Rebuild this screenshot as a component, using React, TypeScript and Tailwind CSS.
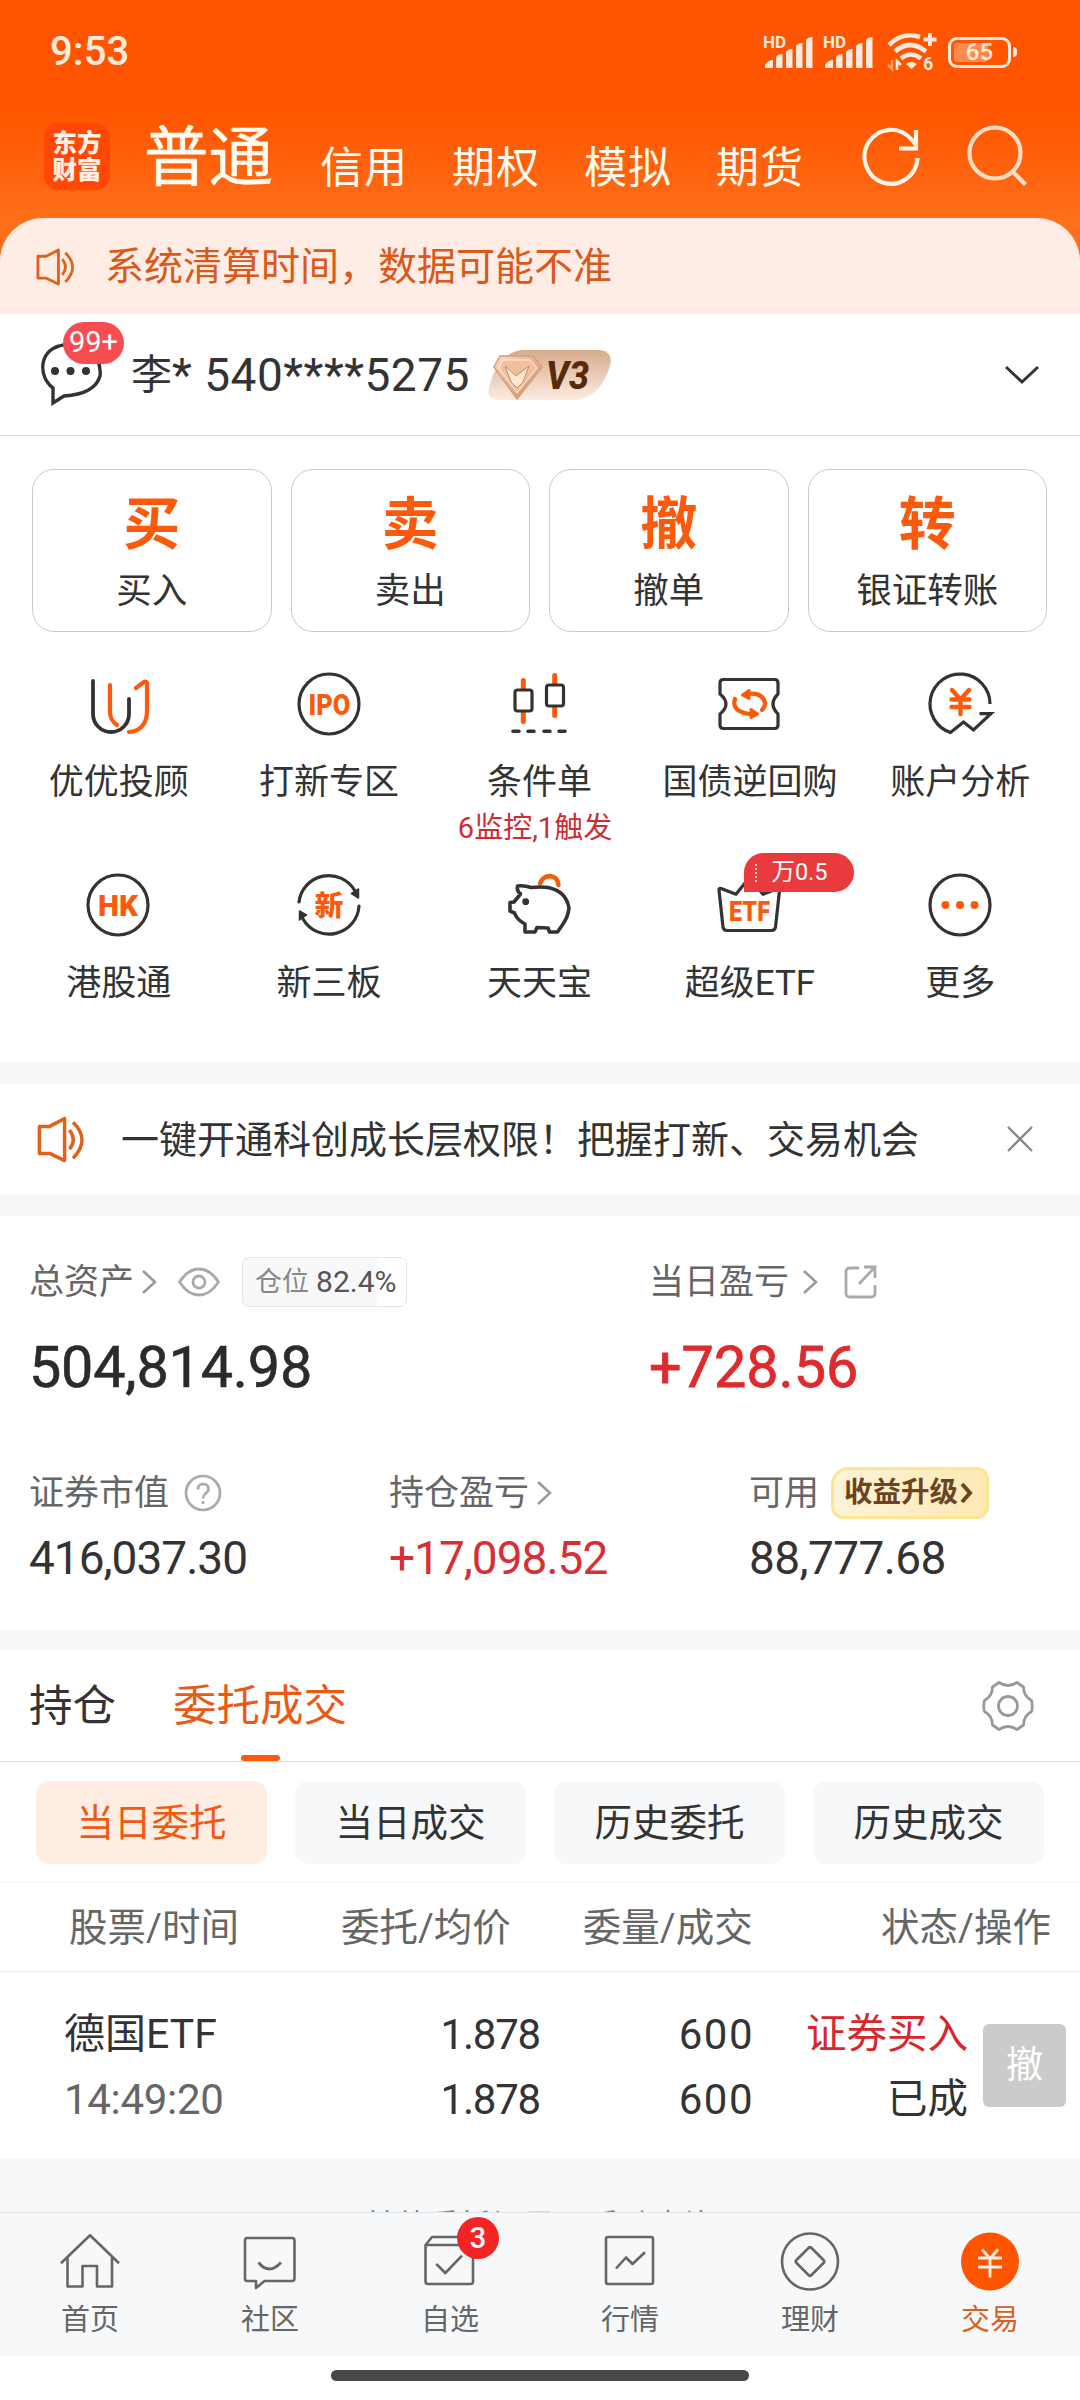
import type { ReactNode } from "react";

const INK = "#333333";
const ORANGE = "#fb5a0c";

/* ---------- status bar ---------- */

const Signal = () => (
  <svg width="52" height="36" viewBox="0 0 52 36" fill="#ffe9dc">
    <text x="0" y="14" fontSize="16.500" fontWeight="700" fontFamily="Roboto" textLength="23" lengthAdjust="spacingAndGlyphs">
      HD
    </text>
    <path d="M2 34v-3q3-5 8-5v8zM13 34V23q2-3 6.500-3v14zM23 34V18q2-3 6.500-3v19zM33 34V12q2-3 6.500-3v25zM43 34V6q2-3 6.500-3v31z" />
  </svg>
);

const Wifi = () => (
  <svg width="52" height="40" viewBox="0 0 52 40" fill="none" stroke="#ffe9dc">
    <path d="M2 13Q16-1 33 5" strokeWidth="4.600" />
    <path d="M8 19.500q15-13 31 0" strokeWidth="4.600" />
    <path d="M14 26.500q10-8 20 0" strokeWidth="4.600" />
    <path d="m19 32 5.500 5 5.500-5q-5.500-4-11 0z" fill="#ffe9dc" stroke="none" />
    <path d="M43 1v13M36.500 7.500h13" strokeWidth="4" />
    <path d="M5 28v9l-4-4" strokeWidth="2.500" opacity=".5" />
    <path d="M10 38v-9l4 4" strokeWidth="2.500" />
    <text x="36" y="38" fontSize="18" fontWeight="700" fontFamily="Roboto" fill="#ffe9dc" stroke="none">
      6
    </text>
  </svg>
);

const StatusBar = () => (
  <div className="flex h-[104px] items-center justify-between pl-[50px] pr-[63px]">
    <span className="text-[40px] font-medium leading-none tracking-[0.2px] text-[#ffeadd]">9:53</span>
    <div className="flex items-center">
      <Signal />
      <span className="w-2" />
      <Signal />
      <span className="w-3" />
      <Wifi />
      <span className="w-[9px]" />
      <div className="relative flex h-[31px] w-[63px] items-center justify-center rounded-[9px] border-[3px] border-[#ffe9dc]">
        <div className="absolute left-[3px] top-[3px] h-[19px] w-[34px] rounded-[3px] bg-[#ff8a4d]" />
        <span className="relative text-[24px] font-medium leading-none text-[#ffe9dc]">65</span>
      </div>
      <span className="ml-[2px] h-[10px] w-[4px] rounded-r bg-[#ffe9dc]" />
    </div>
  </div>
);

/* ---------- header ---------- */

const Header = () => (
  <div className="flex h-[114px] pl-[44px]">
    <div className="mt-[19px] flex h-[67px] w-[66px] shrink-0 flex-col items-center justify-center rounded-[14px] bg-[#ff4708] text-[24.500px] font-black leading-[27px] text-[#fff1e8]">
      <span>东方</span>
      <span>财富</span>
    </div>
    <div className="ml-[34px] mt-[18px] w-[129px] shrink-0 whitespace-nowrap text-[64.500px] leading-[72px] text-[#fffbef] [-webkit-text-stroke:0.6px_#fffbef]">
      普通
    </div>
    <div className="ml-[47px] mt-[36px] flex shrink-0 gap-[44px] text-[43px] leading-[56px] tracking-[1px] text-[#fffbef]">
      {["信用", "期权", "模拟", "期货"].map((t) => (
        <span key={t} className="w-[88px] whitespace-nowrap">
          {t}
        </span>
      ))}
    </div>
    <svg className="ml-[58px] mt-[18px] shrink-0" width="62" height="66" viewBox="0 0 62 66" fill="none" stroke="#fff6e8" strokeWidth="4.200">
      <path d="M55.500 36A26.500 27 0 1 1 49 17l5 6" />
      <path d="M54 8v18.500H37" />
    </svg>
    <svg className="ml-[41px] mt-[18px] shrink-0" width="64" height="66" viewBox="0 0 64 66" fill="none" stroke="#ffdcc4" strokeWidth="4.200">
      <circle cx="30" cy="31" r="25.500" />
      <path d="M47 49l13.500 13.500" />
    </svg>
  </div>
);

const Speaker = ({ size }: { size: number }) => (
  <svg width={size} height={size} viewBox="0 0 40 40" fill="none" stroke="#e0611c" strokeWidth="2.900" strokeLinejoin="round">
    <path d="M2 9.500h8.500L23 3v35L10.500 32H2z" />
    <path d="M27 12.500q6.500 8 0 16M30 6q15 14.500 0 30" />
  </svg>
);

const ChevronRight = ({ className = "" }: { className?: string }) => (
  <svg className={className} width="16" height="26" viewBox="0 0 16 26" fill="none" stroke="#999" strokeWidth="2.500">
    <path d="M2 2l12 11L2 24" />
  </svg>
);

/* ---------- account ---------- */

const VipBadge = () => (
  <svg className="ml-[18px]" width="128" height="52" viewBox="0 0 128 52">
    <defs>
      <linearGradient id="vip" x1="0" y1="0" x2="0" y2="1">
        <stop offset="0" stopColor="#d5ab8c" />
        <stop offset="1" stopColor="#fdece0" />
      </linearGradient>
      <linearGradient id="gem" x1="0" y1="0" x2="1" y2="1">
        <stop offset="0" stopColor="#ffdcc0" />
        <stop offset="1" stopColor="#c98a62" />
      </linearGradient>
    </defs>
    <path d="M36 1h78q14 2 10 16-10 32-35 34H12Q0 50 3 38 12 4 36 1z" fill="url(#vip)" />
    <path d="M14 7h33l9 11-25 32L8 18z" fill="url(#gem)" stroke="#d79d78" strokeWidth="1.500" />
    <path d="M17 11h27l7 8-20 25-18-25z" fill="#f0bf9c" stroke="#fff0e2" strokeWidth="1" />
    <path d="M19 17l11 10 13-10-6 16-6 6-6-6z" fill="#ffe6d2" stroke="#c98b64" strokeWidth="1" />
    <text x="60" y="40" fontSize="39" fontWeight="800" fontStyle="italic" fontFamily="Roboto" fill="#5a2a08" textLength="43" lengthAdjust="spacingAndGlyphs">
      V3
    </text>
  </svg>
);

const Account = () => (
  <div className="flex h-[122px] items-center border-b border-[#dedede] pl-[40px] pr-[41px]">
    <div className="relative h-[106px] w-[84px] pt-[20px]">
      <svg width="64" height="64" viewBox="0 0 64 64">
        <path d="M13 46C-2 34-1 10 19 4q15-5 29 4 14 10 12 26-5 18-36 20l-11 7z" fill="none" stroke={INK} strokeWidth="3.400" />
        <g fill={INK}>
          <circle cx="15" cy="29" r="4" />
          <circle cx="30.500" cy="29" r="4" />
          <circle cx="46" cy="29" r="4" />
        </g>
      </svg>
      <span className="absolute left-[23px] top-0 flex h-[42px] w-[61px] items-center justify-center rounded-full bg-[#f64d52] text-[29px] leading-none text-white">
        99+
      </span>
    </div>
    <div className="ml-[7px] flex w-[337px] items-center whitespace-nowrap leading-[56px] text-[#333]">
      <span className="text-[41px]">李</span>
      <span className="text-[46px] tracking-[0.5px]">* 540****5275</span>
    </div>
    <VipBadge />
    <svg className="ml-auto" width="34" height="20" viewBox="0 0 34 20" fill="none" stroke={INK} strokeWidth="3">
      <path d="M1 2l16 15L33 2" />
    </svg>
  </div>
);

/* ---------- actions ---------- */

const actions = [
  ["买", "买入"],
  ["卖", "卖出"],
  ["撤", "撤单"],
  ["转", "银证转账"],
];

const Actions = () => (
  <div className="mt-[33px] grid grid-cols-4 gap-[19px] pl-[32px] pr-[33px]">
    {actions.map(([big, label]) => (
      <div key={label} className="flex h-[163px] flex-col items-center rounded-[22px] border border-[#cbcbcb]">
        <span className="mt-[21px] text-[57px] font-bold leading-[68px] text-[#fb5a0c]">{big}</span>
        <span className="mt-[10px] text-[35.500px] leading-[44px] text-[#333]">{label}</span>
      </div>
    ))}
  </div>
);

/* Feature icons share one 80x80 canvas centred on 40,40 */
const Icon = ({ children }: { children: ReactNode }) => (
  <svg width="80" height="80" viewBox="0 0 80 80" fill="none" stroke={INK} strokeWidth="3.200" strokeLinecap="round" strokeLinejoin="round">
    {children}
  </svg>
);

const IconText = ({ x, y, w, size, children }: { x: number; y: number; w: number; size: number; children: string }) => (
  <text
    x={x}
    y={y}
    textLength={w}
    lengthAdjust="spacingAndGlyphs"
    fontSize={size}
    fontWeight="900"
    fontFamily="Roboto, 'Noto Sans CJK SC', sans-serif"
    fill={ORANGE}
    stroke="none"
  >
    {children}
  </text>
);

const features: { label: string; sub?: string; tag?: string; icon: ReactNode }[] = [
  {
    label: "优优投顾",
    icon: (
      <Icon>
        <path d="M15 17V50a18 18 0 0 0 36 0V35" strokeWidth="3.800" />
        <path d="M32 21v27c0 7 3 10 7 13M58 24l8-6q3-1.500 3 2v27c0 13-7 20.500-18 21" stroke={ORANGE} strokeWidth="4.200" />
      </Icon>
    ),
  },
  {
    label: "打新专区",
    icon: (
      <Icon>
        <circle cx="40" cy="40" r="30" />
        <IconText x={19.5} y={50.5} w={42} size={29}>
          IPO
        </IconText>
      </Icon>
    ),
  },
  {
    label: "条件单",
    sub: "6监控,1触发",
    icon: (
      <Icon>
        <path d="M24.300 16.500v41M55.700 11.500v40" stroke={ORANGE} strokeWidth="5" />
        <rect x="16" y="26" width="17" height="21" rx="2.500" fill="#fff" />
        <rect x="47.500" y="21" width="17" height="21" rx="2.500" fill="#fff" />
        <path d="M14 67.300h6M29 67.300h6M45 67.300h6M60 67.300h6" strokeWidth="3.600" />
      </Icon>
    ),
  },
  {
    label: "国债逆回购",
    icon: (
      <Icon>
        <path d="M11 30V19q0-3.500 3.500-3.500h51Q69 15.500 69 19v11q-10 10 0 20v11q0 3.500-3.500 3.500h-51Q11 64.500 11 61V50q12-10 0-20z" />
        <g stroke={ORANGE} strokeWidth="4.200">
          <path d="M38 30q16-2 18 9 0 4-3 7M26 35q-4 12 14 15h4" />
          <path d="M40 26.500v8L33.500 31zM42 45.500v8L48.500 50z" fill={ORANGE} strokeWidth="3" />
        </g>
      </Icon>
    ),
  },
  {
    label: "账户分析",
    icon: (
      <Icon>
        <path d="M70 40A30 30 0 1 0 30.500 68.500L43.500 58l10 8L71 49.600H59.500" strokeLinecap="butt" strokeLinejoin="miter" />
        <path d="M32 26l8.500 9.500L49 26M31.500 35.500h18M31.500 43h18M40.500 36v14" stroke={ORANGE} strokeWidth="4.400" />
      </Icon>
    ),
  },
  {
    label: "港股通",
    icon: (
      <Icon>
        <circle cx="40" cy="40" r="30" />
        <IconText x={20} y={50.5} w={40} size={29}>
          HK
        </IconText>
      </Icon>
    ),
  },
  {
    label: "新三板",
    icon: (
      <Icon>
        <path d="M10 37A30 30 0 0 1 66 26M70 41A30 30 0 0 1 14 54" />
        <path d="M62.500 28.500L69.500 24v9zM17.500 50L10.500 46v9z" fill={INK} strokeWidth="1.500" />
        <IconText x={25.5} y={50.5} w={29} size={28}>
          新
        </IconText>
      </Icon>
    ),
  },
  {
    label: "天天宝",
    icon: (
      <Icon>
        <path d="M41 18.500Q44 11 51 11q8 1 8.500 9" stroke={ORANGE} strokeWidth="4.400" />
        <path
          d="M18.500 21Q25 20 32 22.500q10-1 17 0Q67 26 70 43q-1 9-6 16l-5.500 8h-8l-1.500-4-11-.5-2 4.500H26v-8Q18 55 15.500 48l-4.500-2v-8.500l4-.5 6.500-8q-4-3-3-8z"
          strokeWidth="3.600"
        />
        <circle cx="26.700" cy="36.700" r="3.400" fill={INK} stroke="none" />
      </Icon>
    ),
  },
  {
    label: "超级ETF",
    tag: "万0.5",
    icon: (
      <Icon>
        <path d="M10 25q0-2 2-1.500L27 29.300 40 13l14 16.300L69 23.500q2-.5 1.500 2L66.500 62q-.5 3.500-4 3.500H18q-3.500 0-4-3.500z" />
        <IconText x={20} y={56} w={41} size={28}>
          ETF
        </IconText>
      </Icon>
    ),
  },
  {
    label: "更多",
    icon: (
      <Icon>
        <circle cx="40" cy="40" r="30" />
        <g fill={ORANGE} stroke="none">
          <circle cx="25.500" cy="40" r="4" />
          <circle cx="40" cy="40" r="4" />
          <circle cx="54.500" cy="40" r="4" />
        </g>
      </Icon>
    ),
  },
];

const Features = () => (
  <div className="mt-[32px] grid h-[398px] auto-rows-[201px] grid-cols-5 pl-[13px] pr-[15px]">
    {features.map(({ label, sub, tag, icon }) => (
      <div key={label} className="flex flex-col items-center">
        <div className="relative">
          {icon}
          {tag && (
            <span className="absolute -top-[12px] left-[35px] flex h-[39px] w-[110px] items-center rounded-full rounded-bl-none bg-[#e93b3d] pl-[11px] text-[23.500px] leading-none text-white">
              <i className="mr-[14px] h-[18px] border-l-2 border-dotted border-white/80" />
              {tag}
            </span>
          )}
        </div>
        <span className="ml-px mt-[19px] text-[35px] leading-[40px] text-[#333]">{label}</span>
        {sub && <span className="mr-[8px] mt-[8px] whitespace-nowrap text-[29px] leading-[34px] text-[#cc2f33]">{sub}</span>}
      </div>
    ))}
  </div>
);

const Band = () => <div className="h-[22px] shrink-0 bg-[#f7f8fa]" />;

const Notice = () => (
  <div className="flex h-[110px] items-center pl-[37px] pr-[47px]">
    <Speaker size={48} />
    <span className="ml-[36px] mt-[1px] whitespace-nowrap text-[38px] leading-none text-[#333]">一键开通科创成长层权限！把握打新、交易机会</span>
    <svg className="ml-auto" width="26" height="26" viewBox="0 0 26 26" stroke="#888" strokeWidth="2.400">
      <path d="M1 1l24 24M25 1L1 25" />
    </svg>
  </div>
);

/* ---------- assets ---------- */

const Assets = () => (
  <div className="h-[413px] pl-[29px] text-[#666]">
    <div className="flex pt-[40px]">
      <div className="w-[620px]">
        <div className="flex h-[52px] items-center text-[35px] leading-none">
          总资产
          <ChevronRight className="ml-[7px]" />
          <svg className="ml-[21px]" width="42" height="30" viewBox="0 0 42 30" fill="none" stroke="#aaa" strokeWidth="2.800">
            <path d="M1.500 15Q10 2 21 2t19.500 13Q32 28 21 28T1.500 15z" />
            <circle cx="21" cy="15" r="6" />
          </svg>
          <span className="ml-[22px] flex h-[50px] w-[165px] items-center whitespace-nowrap rounded-[7px] border border-[#e3e4e8] bg-[linear-gradient(90deg,#f7f8fa_82.4%,#fff_82.4%)] pl-[12px] text-[27px] text-[#888]">
            仓位 <b className="ml-[7px] text-[30px] font-normal text-[#555]">82.4%</b>
          </span>
        </div>
        <div className="mt-[27px] text-[57.500px] leading-[66px] tracking-[-0.2px] text-[#2b2b2b] [-webkit-text-stroke:0.6px_#2b2b2b]">504,814.98</div>
      </div>
      <div>
        <div className="flex h-[52px] items-center text-[35px] leading-none">
          当日盈亏
          <ChevronRight className="ml-[13px]" />
          <svg className="ml-[26px]" width="34" height="34" viewBox="0 0 34 34" fill="none" stroke="#aaa" strokeWidth="2.800">
            <path d="M15 3H6Q2 3 2 7v21q0 4 4 4h21q4 0 4-4v-8M20 2h11v11M31 2L15 19" />
          </svg>
        </div>
        <div className="mt-[27px] text-[57.500px] leading-[66px] text-[#df2b2e] [-webkit-text-stroke:0.8px_#df2b2e]">+728.56</div>
      </div>
    </div>
    <div className="mt-[66px] flex">
      <div className="w-[360px]">
        <div className="flex h-[52px] items-center text-[35px] leading-none">
          证券市值
          <svg className="ml-[15px]" width="38" height="38" viewBox="0 0 38 38" fill="none" stroke="#aaa" strokeWidth="2.700">
            <circle cx="19" cy="19" r="17" />
            <path d="M14 15.500q0-5.500 5-5.500 5.500 0 5.500 5 0 2.500-3 4.500-2.500 2-2.500 5M19 27v3" />
          </svg>
        </div>
        <div className="mt-[12px] text-[46px] leading-[54px] tracking-[-1px] text-[#333]">416,037.30</div>
      </div>
      <div className="w-[360px]">
        <div className="flex h-[52px] items-center text-[35px] leading-none">
          持仓盈亏
          <ChevronRight className="ml-[7px]" />
        </div>
        <div className="mt-[12px] text-[46px] leading-[54px] tracking-[-1px] text-[#d63034]">+17,098.52</div>
      </div>
      <div>
        <div className="flex h-[52px] items-center text-[35px] leading-none">
          可用
          <span className="ml-[12px] flex h-[52px] w-[158px] items-center whitespace-nowrap rounded-[12px] rounded-tl-[18px] border-[3px] border-[#fbe692] bg-gradient-to-r from-[#fdf3d8] to-[#fde9b4] pl-[10px] text-[28.500px] font-bold text-[#6b4423]">
            收益升级
            <svg className="ml-[2px] shrink-0" width="14" height="24" viewBox="0 0 14 24" fill="none" stroke="#6b4423" strokeWidth="4">
              <path d="M2 3l8 9-8 9" />
            </svg>
          </span>
        </div>
        <div className="mt-[12px] text-[46px] leading-[54px] tracking-[-0.6px] text-[#333]">88,777.68</div>
      </div>
    </div>
  </div>
);

/* ---------- orders ---------- */

const Gear = () => (
  <svg className="ml-auto" width="52" height="52" viewBox="0 0 52 52" fill="none" stroke="#999" strokeWidth="2.800" strokeLinejoin="round">
    <path d="M17 2.500q9 6 18 0l6.500 4.500q0 9 8 13.500 1.500 5.500 0 11-8 4.500-8 13.500L35 49.500q-9-6-18 0L10.500 45q0-9-8-13.500-1.500-5.500 0-11 8-4.500 8-13.500z" />
    <circle cx="26" cy="26" r="9.500" />
  </svg>
);

const chips = ["当日委托", "当日成交", "历史委托", "历史成交"];

const Orders = () => (
  <div>
    <div className="flex h-[111px] items-center border-b border-[#dcdcdc] pl-[29px] pr-[46px] text-[43.500px] leading-none">
      <span className="pt-[2px] text-[#333]">持仓</span>
      <span className="relative ml-[57px] flex h-full items-center pt-[2px] text-[#ea5a14]">
        委托成交
        <i className="absolute bottom-0 left-[68px] h-[6px] w-[39px] rounded-[3px] bg-[#fb5a0c]" />
      </span>
      <Gear />
    </div>
    <div className="grid h-[121px] grid-cols-4 gap-[28px] border-b border-[#f2f3f5] px-[36px] pt-[19px]">
      {chips.map((c, i) => (
        <div
          key={c}
          className={`flex h-[83px] items-center justify-center rounded-[13px] pt-[2px] text-[37.500px] leading-none ${
            i === 0 ? "bg-[#ffede4] text-[#ee5a12]" : "bg-[#f7f8fa] text-[#333]"
          }`}
        >
          {c}
        </div>
      ))}
    </div>
    <div className="flex h-[89px] items-center border-b border-[#ececec] pl-[69px] pr-[29px] pt-[2px] text-[38.500px] leading-none text-[#666]">
      <span>股票/时间</span>
      <span className="ml-[102px]">委托/均价</span>
      <span className="ml-[72px]">委量/成交</span>
      <span className="ml-auto">状态/操作</span>
    </div>
    <div className="flex h-[187px] items-center whitespace-nowrap pl-[64px] pr-[14px] text-[42px] leading-[65px] text-[#333]">
      <div className="w-[175px] pt-[2px]">
        <div className="text-[41px]">德国ETF</div>
        <div className="tracking-[-0.3px] text-[#666]">14:49:20</div>
      </div>
      <div className="w-[301px] pt-[2px] text-right tracking-[-1.2px]">
        <div>1.878</div>
        <div>1.878</div>
      </div>
      <div className="w-[214px] pt-[2px] text-right tracking-[1.500px]">
        <div>600</div>
        <div>600</div>
      </div>
      <div className="w-[214px] pt-[2px] text-right text-[40.500px]">
        <div className="text-[#d8272c]">证券买入</div>
        <div>已成</div>
      </div>
      <div className="ml-[15px] flex h-[83px] w-[83px] items-center justify-center rounded-[6px] bg-[#cbcbcb] text-[37px] text-white">撤</div>
    </div>
  </div>
);

/* ---------- bottom nav ---------- */

const NavIcon = ({ children }: { children: ReactNode }) => (
  <svg width="66" height="66" viewBox="0 0 66 66" fill="none" stroke="#666" strokeWidth="2.600" strokeLinejoin="round">
    {children}
  </svg>
);

const tabs: { label: string; badge?: string; active?: boolean; icon: ReactNode }[] = [
  {
    label: "首页",
    icon: (
      <NavIcon>
        <path d="M4 33.300L33 5.300l29 28M10.500 27.500v29h15V36h14.500v20.500h15v-29" />
      </NavIcon>
    ),
  },
  {
    label: "社区",
    icon: (
      <NavIcon>
        <path d="M10 8h45q2.500 0 2.500 2.500v38q0 2.500-2.500 2.500H27.500l-8.500 7v-7h-9Q8 51 8 48.500v-38Q8 8 10 8z" />
        <path d="M21.500 32.500q10.500 13 22.500 0" strokeWidth="2.800" />
      </NavIcon>
    ),
  },
  {
    label: "自选",
    badge: "3",
    icon: (
      <NavIcon>
        <path d="M8.500 15v36.500q0 2.500 2.500 2.500h42.500q2.500 0 2.500-2.500V15l-6-8H15zM8.500 15H56M19.300 34l9 9L45 25.700" />
      </NavIcon>
    ),
  },
  {
    label: "行情",
    icon: (
      <NavIcon>
        <rect x="9" y="7" width="47" height="47" rx="2" />
        <path d="M19 38.500l10-11 6.500 6.500L48 22.300" />
      </NavIcon>
    ),
  },
  {
    label: "理财",
    icon: (
      <NavIcon>
        <circle cx="33" cy="31.500" r="28" />
        <path d="M31.500 18q1.500-1.500 3 0l12 12q1.500 1.500 0 3l-12 12q-1.500 1.500-3 0l-12-12q-1.500-1.500 0-3z" />
      </NavIcon>
    ),
  },
  {
    label: "交易",
    active: true,
    icon: (
      <NavIcon>
        <circle cx="33" cy="31.500" r="29" fill="#ff5500" stroke="none" />
        <path d="M25 19.500l8 9 8-9M21 28h24M21 37h24M33 28v19.500" stroke="#ffefe2" strokeWidth="2.800" />
      </NavIcon>
    ),
  },
];

const BottomNav = () => (
  <div className="grid h-[144px] shrink-0 grid-cols-6 border-t border-[#e2e4e6] bg-[#f7f8fa]">
    {tabs.map(({ label, badge, active, icon }) => (
      <div key={label} className="flex flex-col items-center pt-[17px]">
        <div className="relative">
          {icon}
          {badge && (
            <span className="absolute -top-[13px] left-[40px] flex size-[42px] items-center justify-center rounded-full bg-[#f32424] text-[29px] font-medium leading-none text-white">
              {badge}
            </span>
          )}
        </div>
        <span className={`mt-[7px] text-[29px] leading-[34px] ${active ? "text-[#d9601c]" : "text-[#666]"}`}>{label}</span>
      </div>
    ))}
  </div>
);

export default function App() {
  return (
    <div className="flex h-[2400px] w-[1080px] flex-col overflow-hidden bg-white font-[Roboto,'Noto_Sans_CJK_SC',sans-serif]">
      <div className="h-[314px] shrink-0 bg-[linear-gradient(180deg,#ff5500_0px,#ff5500_110px,#ff6e19_218px,#ff6e19_314px)]">
        <StatusBar />
        <Header />
        <div className="flex h-[96px] items-center rounded-t-[43px] bg-[#ffede5] pl-[36px]">
          <Speaker size={39} />
          <span className="ml-[30px] mt-[2px] text-[39px] leading-none text-[#d8591a]">系统清算时间，数据可能不准</span>
        </div>
      </div>
      <Account />
      <Actions />
      <Features />
      <Band />
      <Notice />
      <Band />
      <Assets />
      <Band />
      <Orders />
      {/* Footer hint, mostly hidden behind the tab bar */}
      <div className="h-[53px] shrink-0 overflow-hidden bg-[#f7f8fa] pt-[50px] text-center text-[32px] leading-[34px] text-[#888]">
        其他委托记录，手动查询
      </div>
      <BottomNav />
      <div className="flex h-[44px] shrink-0 justify-center pt-[14px]">
        <div className="h-[11px] w-[418px] rounded-full bg-[#474747]" />
      </div>
    </div>
  );
}
